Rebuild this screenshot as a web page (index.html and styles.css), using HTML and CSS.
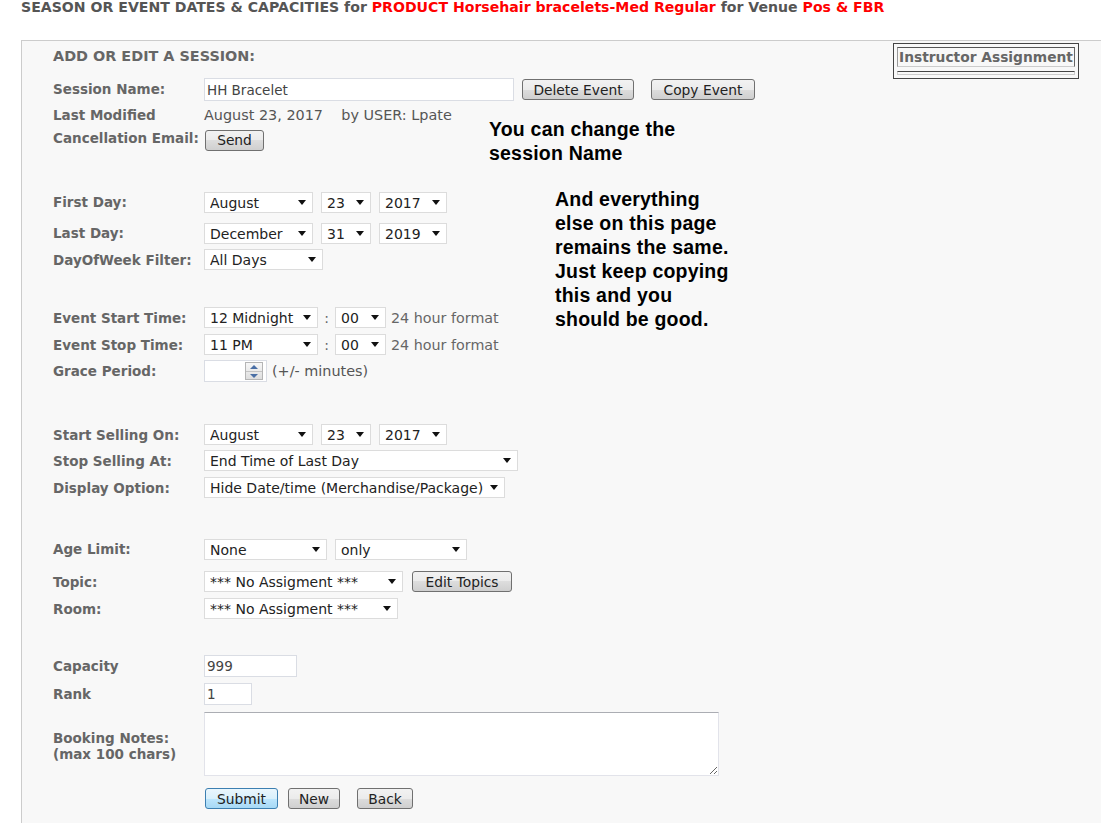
FILE: index.html
```html
<!DOCTYPE html>
<html lang="en">
<head>
  <meta charset="UTF-8">
  <title>Season or Event Dates &amp; Capacities</title>
  <link rel="stylesheet" href="styles.css">
</head>
<body>
  <!-- page title -->
  <h1 class="page-title">SEASON OR EVENT DATES &amp; CAPACITIES for <span class="hl">PRODUCT Horsehair bracelets-Med Regular</span> for Venue <span class="hl">Pos &amp; FBR</span></h1>

  <div class="panel">
    <!-- right side box -->
    <div class="ia-box">
      <div class="ia-title">Instructor Assignment</div>
      <div class="ia-strip"></div>
    </div>

    <!-- help notes -->
    <p class="note note-name">You can change the<br>session Name</p>
    <p class="note note-rest">And everything<br>else on this page<br>remains the same.<br>Just keep copying<br>this and you<br>should be good.</p>

    <form class="session-form">
      <div class="form-heading">ADD OR EDIT A SESSION:</div>

      <div class="row r-session">
        <label>Session Name:</label>
        <input class="txt w-name" type="text" value="HH Bracelet">
        <button type="button" class="btn w-delete">Delete Event</button>
        <button type="button" class="btn w-copy">Copy Event</button>
      </div>
      <div class="row r-mod">
        <label>Last Modified</label>
        <span class="val">August 23, 2017&nbsp;&nbsp;&nbsp; by USER: Lpate</span>
      </div>
      <div class="row r-cancel">
        <label>Cancellation Email:</label>
        <button type="button" class="btn w-send">Send</button>
      </div>

      <div class="row r-first">
        <label>First Day:</label>
        <span class="sel w-month"><select><option>August</option></select></span>
        <span class="sel w-day"><select><option>23</option></select></span>
        <span class="sel w-year"><select><option>2017</option></select></span>
      </div>
      <div class="row r-last">
        <label>Last Day:</label>
        <span class="sel w-month"><select><option>December</option></select></span>
        <span class="sel w-day"><select><option>31</option></select></span>
        <span class="sel w-year"><select><option>2019</option></select></span>
      </div>
      <div class="row r-dow">
        <label>DayOfWeek Filter:</label>
        <span class="sel w-dow"><select><option>All Days</option></select></span>
      </div>

      <div class="row r-start">
        <label>Event Start Time:</label>
        <span class="sel w-hour"><select><option>12 Midnight</option></select></span>
        <span class="colon">:</span>
        <span class="sel w-min"><select><option>00</option></select></span>
        <span class="hint">24 hour format</span>
      </div>
      <div class="row r-stop">
        <label>Event Stop Time:</label>
        <span class="sel w-hour"><select><option>11 PM</option></select></span>
        <span class="colon">:</span>
        <span class="sel w-min"><select><option>00</option></select></span>
        <span class="hint">24 hour format</span>
      </div>
      <div class="row r-grace">
        <label>Grace Period:</label>
        <span class="spin-field">
          <input type="text" value="">
          <span class="spin"><span class="up"></span><span class="down"></span></span>
        </span>
        <span class="val grace-unit">(+/- minutes)</span>
      </div>

      <div class="row r-sell">
        <label>Start Selling On:</label>
        <span class="sel w-month"><select><option>August</option></select></span>
        <span class="sel w-day"><select><option>23</option></select></span>
        <span class="sel w-year"><select><option>2017</option></select></span>
      </div>
      <div class="row r-stopsell">
        <label>Stop Selling At:</label>
        <span class="sel w-stopsell"><select><option>End Time of Last Day</option></select></span>
      </div>
      <div class="row r-display">
        <label>Display Option:</label>
        <span class="sel w-display"><select><option>Hide Date/time (Merchandise/Package)</option></select></span>
      </div>

      <div class="row r-age">
        <label>Age Limit:</label>
        <span class="sel w-age"><select><option>None</option></select></span>
        <span class="sel w-only"><select><option>only</option></select></span>
      </div>
      <div class="row r-topic">
        <label>Topic:</label>
        <span class="sel w-topic"><select><option>*** No Assigment ***</option></select></span>
        <button type="button" class="btn w-topics">Edit Topics</button>
      </div>
      <div class="row r-room">
        <label>Room:</label>
        <span class="sel w-room"><select><option>*** No Assigment ***</option></select></span>
      </div>

      <div class="row r-cap">
        <label>Capacity</label>
        <input class="txt w-cap" type="text" value="999">
      </div>
      <div class="row r-rank">
        <label>Rank</label>
        <input class="txt w-rank" type="text" value="1">
      </div>
      <div class="row r-notes">
        <label>Booking Notes:<br>(max 100 chars)</label>
        <textarea class="notes"></textarea>
      </div>

      <div class="row r-actions">
        <label></label>
        <button type="submit" class="btn btn-primary w-submit">Submit</button>
        <button type="button" class="btn w-new">New</button>
        <button type="button" class="btn w-back">Back</button>
      </div>
    </form>
  </div>
</body>
</html>
```

FILE: styles.css
```css
/* base */
body {
  margin: 0;
  font-family: "DejaVu Sans", Verdana, sans-serif;
  background-color: #fff;
  color: #555;
}

.page-title {
  margin: 0;
  height: 40px;
  padding-left: 21px;
  font-size: 14.1px;
  line-height: 14px;
  font-weight: bold;
  color: #555;
}

.hl {
  color: #f00;
}

/* main panel */
.panel {
  position: relative;
  margin-left: 21px;
  padding: 4px 0 30px 31px;
  border-top: 1px solid #ccc;
  border-left: 1px solid #ccc;
  background-color: #f8f8f8;
}

/* instructor box */
.ia-box {
  position: absolute;
  top: 2px;
  right: 22px;
  width: 178px;
  padding: 3px 3px 3px;
  border: 1px solid #444;
}

.ia-title {
  height: 18px;
  padding-left: 1px;
  border: 1px solid #ccc;
  border-top-color: #555;
  border-left-color: #999;
  border-right-color: #666;
  font-size: 13.8px;
  font-weight: bold;
  line-height: 18px;
  color: #666;
  white-space: nowrap;
  overflow: hidden;
}

.ia-strip {
  height: 2px;
  margin-top: 4px;
  border: 1px solid #ccc;
  border-top-color: #444;
}

/* notes */
.note {
  position: absolute;
  margin: 0;
  font-family: "Liberation Sans", Arial, sans-serif;
  font-size: 19.5px;
  font-weight: bold;
  line-height: 24px;
  letter-spacing: 0.2px;
  color: #000;
}

.note-name {
  top: 76px;
  left: 467px;
}

.note-rest {
  top: 146px;
  left: 533px;
}

/* form */
.form-heading {
  height: 22px;
  line-height: 22px;
  font-size: 14.4px;
  font-weight: bold;
  color: #666;
}

.row {
  display: flex;
  align-items: center;
  height: 21px;
  font-size: 13.5px;
}

.row label {
  flex: 0 0 151px;
  font-weight: bold;
  color: #666;
  line-height: 16px;
  white-space: nowrap;
}

.r-session label,
.r-first label,
.r-last label,
.r-age label { margin-bottom: 2px; }
.r-cancel label { margin-bottom: 4px; }

.r-session { margin-top: 11px; height: 23px; }
.r-mod { margin-top: 3px; height: 22px; }
.r-cancel { margin-top: 3px; height: 22px; }
.r-first { margin-top: 41px; }
.r-last { margin-top: 10px; }
.r-dow { margin-top: 5px; }
.r-start { margin-top: 37px; }
.r-stop { margin-top: 6px; }
.r-grace { margin-top: 5px; height: 22px; }
.r-sell { margin-top: 42px; }
.r-stopsell { margin-top: 5px; }
.r-display { margin-top: 6px; }
.r-age { margin-top: 41px; }
.r-topic { margin-top: 11px; }
.r-room { margin-top: 6px; }
.r-cap { margin-top: 36px; height: 22px; }
.r-rank { margin-top: 6px; height: 22px; }
.r-notes { margin-top: 7px; height: 64px; }
.r-notes label { padding-top: 3px; }
.r-actions { margin-top: 12px; }

.val {
  font-size: 14.4px;
  color: #555;
}

.grace-unit {
  margin-left: 5px;
}

.hint {
  margin-left: 5px;
  font-size: 14.3px;
  color: #666;
}

.colon {
  width: 17px;
  text-align: center;
  font-size: 14px;
  color: #666;
}

/* text inputs */
.txt {
  box-sizing: border-box;
  height: 22px;
  padding: 0 2px;
  border: 1px solid #dadde4;
  background: #fff;
  font-family: inherit;
  font-size: 13.5px;
  color: #444;
}

.w-name { width: 310px; height: 23px; }
.w-cap { width: 93px; }
.w-rank { width: 48px; }

.notes {
  box-sizing: border-box;
  width: 515px;
  height: 64px;
  border: 1px solid #e2e3ea;
  border-top-color: #abadb3;
  background: #fff;
  resize: both;
}

/* selects */
.sel {
  position: relative;
  display: inline-block;
  height: 21px;
  margin-right: 8px;
}

.sel select {
  appearance: none;
  -webkit-appearance: none;
  box-sizing: border-box;
  width: 100%;
  height: 21px;
  padding: 0 0 0 5px;
  border: 1px solid #dcdcdc;
  border-radius: 0;
  background: #fff;
  font-family: inherit;
  font-size: 14px;
  color: #222;
}

.sel::after {
  content: "";
  position: absolute;
  top: 8px;
  right: 7px;
  border-left: 4.5px solid transparent;
  border-right: 4.5px solid transparent;
  border-top: 5px solid #111;
  pointer-events: none;
}

.w-month { width: 109px; }
.w-day { width: 50px; }
.w-year { width: 68px; }
.w-dow { width: 119px; }
.w-hour { width: 114px; margin-right: 0; }
.w-min { width: 51px; margin-right: 0; }
.w-stopsell { width: 314px; }
.w-display { width: 301px; }
.w-age { width: 123px; }
.w-only { width: 132px; }
.w-topic { width: 199px; margin-right: 9px; }
.w-room { width: 194px; }

/* grace period spinner */
.spin-field {
  box-sizing: border-box;
  display: inline-flex;
  align-items: center;
  width: 63px;
  height: 22px;
  border: 1px solid #dadde4;
  background: #fff;
}

.spin-field input {
  flex: 1;
  min-width: 0;
  height: 18px;
  padding: 0;
  border: none;
  outline: none;
  background: transparent;
}

.spin {
  display: flex;
  flex-direction: column;
  box-sizing: border-box;
  width: 18px;
  height: 18px;
  margin-right: 3px;
  border: 1px solid #b5b5b5;
  background: linear-gradient(#f7f7f7, #dedede);
}

.spin span {
  flex: 1;
  position: relative;
}

.spin .up {
  border-bottom: 1px solid #c4c4c4;
}

.spin .up::after,
.spin .down::after {
  content: "";
  position: absolute;
  left: 4px;
  border-left: 4px solid transparent;
  border-right: 4px solid transparent;
}

.spin .up::after {
  top: 2px;
  border-bottom: 4px solid #4a6fa5;
}

.spin .down::after {
  top: 2px;
  border-top: 4px solid #4a6fa5;
}

/* buttons */
.btn {
  box-sizing: border-box;
  height: 21px;
  padding: 0;
  border: 1px solid #707070;
  border-radius: 3px;
  background: linear-gradient(#f2f2f2 0%, #ebebeb 50%, #dddddd 50%, #cfcfcf 100%);
  font-family: inherit;
  font-size: 13.8px;
  color: #222;
  cursor: pointer;
}

.btn-primary {
  border-color: #3c7fb1;
  background: linear-gradient(#eaf6fd 0%, #d9f0fc 50%, #bee6fd 50%, #a7d9f5 100%);
}

.w-delete { width: 112px; margin-left: 8px; }
.w-copy { width: 104px; margin-left: 17px; }
.w-send { width: 59px; margin-left: 1px; }
.w-topics { width: 100px; }
.w-submit { width: 73px; margin-left: 1px; }
.w-new { width: 52px; margin-left: 10px; }
.w-back { width: 56px; margin-left: 17px; }
```
